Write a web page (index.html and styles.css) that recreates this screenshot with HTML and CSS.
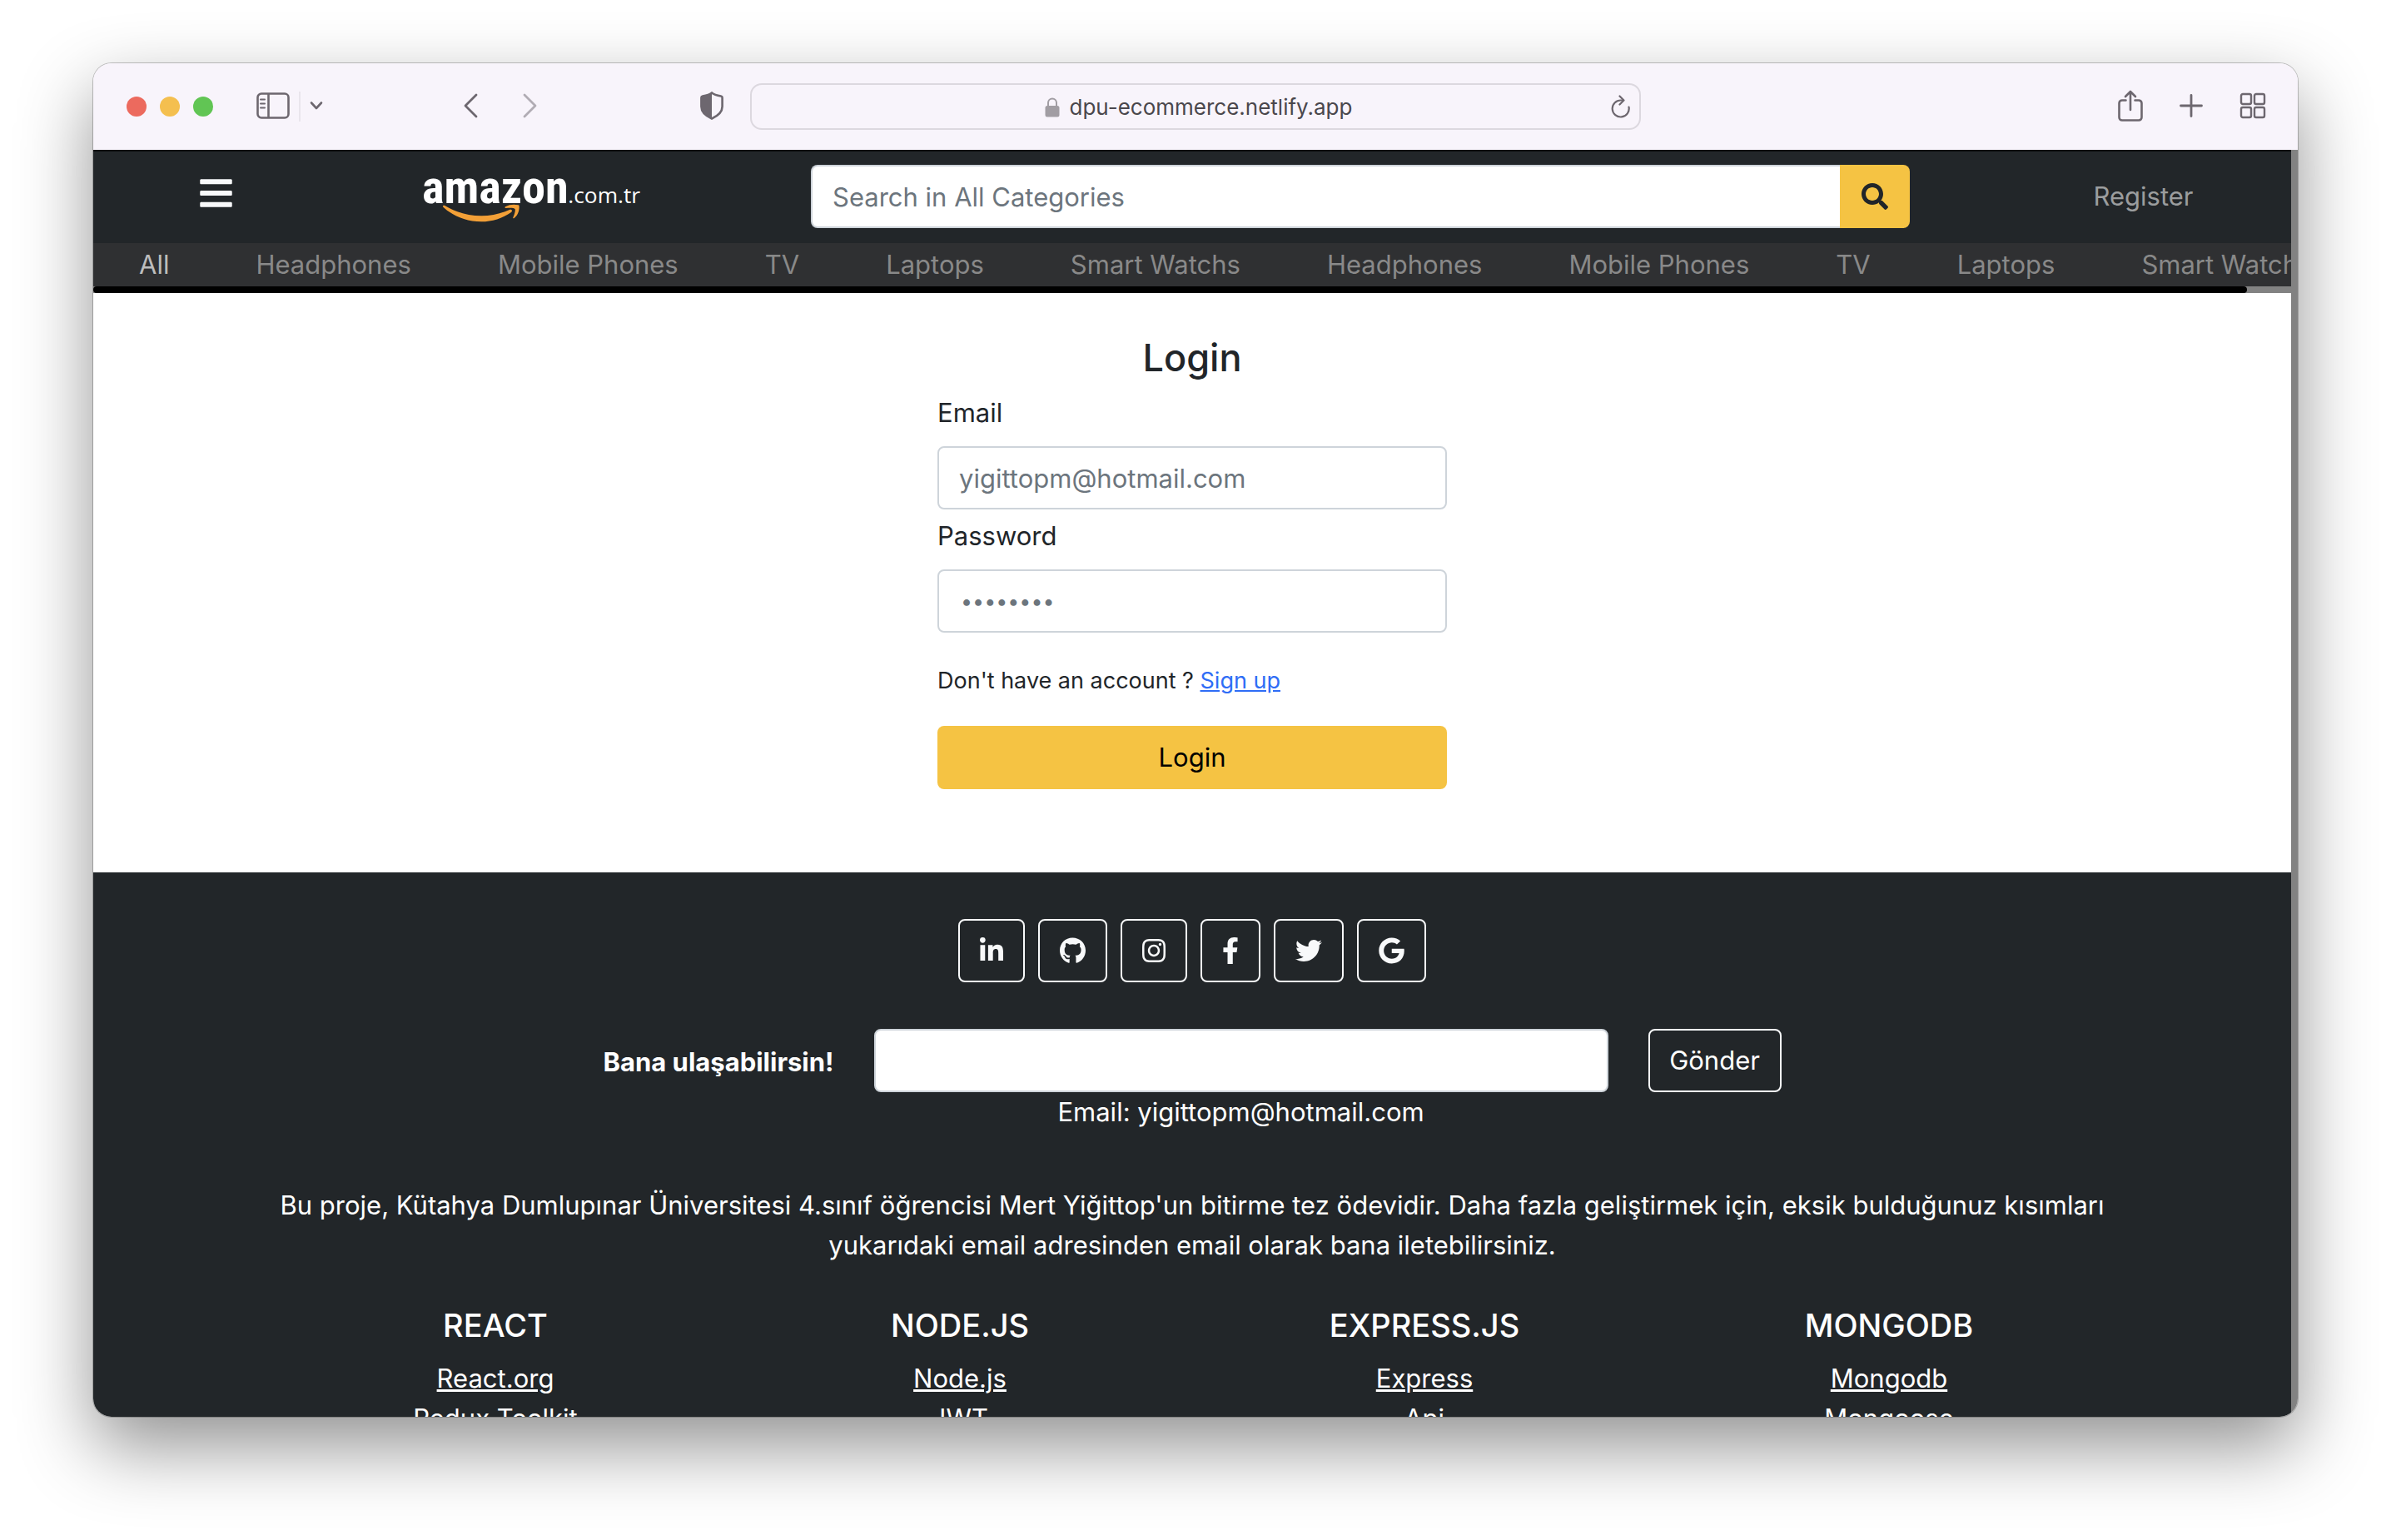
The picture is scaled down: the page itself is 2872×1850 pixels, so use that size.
FILE: index.html
```html
<!DOCTYPE html>
<html lang="tr">
<head>
<meta charset="utf-8">
<meta name="viewport" content="width=device-width, initial-scale=1">
<title>Login</title>
<link rel="stylesheet" href="styles.css">
</head>
<body>
<div class="window">
  <div class="toolbar">
    <div class="toolbar-left">
      <div class="lights"><span class="light red"></span><span class="light yellow"></span><span class="light green"></span></div>
      <div class="sidebar-tools">
        <button class="tool" aria-label="Sidebar"><svg width="40" height="32" viewBox="0 0 40 32" fill="none" stroke="currentColor" stroke-width="2.6"><rect x="1.5" y="1.5" width="37" height="29" rx="4.5"/><path d="M14.5 2v28"/><path d="M5 8.5h5M5 13.5h5M5 18.5h5" stroke-width="2" stroke-linecap="round"/></svg></button>
        <span class="divider"></span>
        <button class="tool" aria-label="Tab groups"><svg width="16" height="12" viewBox="0 0 16 12" fill="none" stroke="currentColor" stroke-width="2.6" stroke-linecap="round" stroke-linejoin="round"><path d="M2 2.500l6 6.500 6-6.500"/></svg></button>
      </div>
      <div class="history">
        <button class="tool" aria-label="Back"><svg width="20" height="32" viewBox="0 0 20 32" fill="none" stroke="currentColor" stroke-width="2.8" stroke-linecap="round" stroke-linejoin="round"><path d="M17 3L4 16l13 13"/></svg></button>
        <button class="tool faded" aria-label="Forward"><svg width="20" height="32" viewBox="0 0 20 32" fill="none" stroke="currentColor" stroke-width="2.8" stroke-linecap="round" stroke-linejoin="round"><path d="M3 3l13 13L3 29"/></svg></button>
      </div>
      <button class="tool shield" aria-label="Privacy report"><svg width="28" height="34" viewBox="0 0 28 34"><path d="M14 1.500C17 4 22 5 25 5.500c1 .2 1.600.9 1.600 1.800V18c0 7-6 11.500-12.600 14.500C7.400 29.500 1.400 25 1.400 18V7.300c0-.9.6-1.600 1.600-1.800C6 5 11 4 14 1.500z" fill="none" stroke="currentColor" stroke-width="2.600"/><path d="M14 1.500v31C7.400 29.500 1.400 25 1.400 18V7.300c0-.9.6-1.600 1.600-1.800C6 5 11 4 14 1.500z" fill="currentColor"/></svg></button>
    </div>
    <div class="address">
      <div class="address-site">
        <svg class="lock" width="18" height="24" viewBox="0 0 18 24"><rect x="0.500" y="10" width="17" height="13.500" rx="2.500" fill="currentColor"/><path d="M4 11V6.500a5 5 0 0 1 10 0V11" fill="none" stroke="currentColor" stroke-width="2"/></svg>
        <input class="address-input" type="text" value="dpu-ecommerce.netlify.app" aria-label="Address">
      </div>
      <button class="tool reload" aria-label="Reload"><svg width="24" height="28" viewBox="0 0 24 28" fill="none" stroke="currentColor" stroke-width="2.200" stroke-linecap="round" stroke-linejoin="round"><path d="M21.500 14.500A10 10 0 1 1 12 6.500h2.500"/><path d="M10.500 1.500l5 5-5 5"/></svg></button>
    </div>
    <div class="toolbar-right">
      <button class="tool" aria-label="Share"><svg width="30" height="38" viewBox="0 0 30 38" fill="none" stroke="currentColor" stroke-width="2.600" stroke-linecap="round" stroke-linejoin="round"><path d="M9.500 12.500H5A3.500 3.500 0 0 0 1.500 16v17A3.500 3.500 0 0 0 5 36.500h20a3.500 3.500 0 0 0 3.500-3.500V16a3.500 3.500 0 0 0-3.500-3.500h-4.500"/><path d="M15 24V2M9 8l6-6 6 6"/></svg></button>
      <button class="tool" aria-label="New tab"><svg width="28" height="28" viewBox="0 0 28 28" fill="none" stroke="currentColor" stroke-width="2.800" stroke-linecap="round"><path d="M14 1.500v25M1.500 14h25"/></svg></button>
      <button class="tool" aria-label="Tab overview"><svg width="32" height="32" viewBox="0 0 32 32" fill="none" stroke="currentColor" stroke-width="2.400"><rect x="2" y="2" width="12" height="12" rx="2"/><rect x="18" y="2" width="12" height="12" rx="2"/><rect x="2" y="18" width="12" height="12" rx="2"/><rect x="18" y="18" width="12" height="12" rx="2"/></svg></button>
    </div>
  </div>

  <div class="viewport">
    <div class="page">
      <header class="header">
        <button class="menu" aria-label="Menu"><svg width="39" height="44" viewBox="0 0 448 512" fill="currentColor"><path d="M16 132h416c8.837 0 16-7.163 16-16V76c0-8.837-7.163-16-16-16H16C7.163 60 0 67.163 0 76v40c0 8.837 7.163 16 16 16zm0 160h416c8.837 0 16-7.163 16-16v-40c0-8.837-7.163-16-16-16H16c-8.837 0-16 7.163-16 16v40c0 8.837 7.163 16 16 16zm0 160h416c8.837 0 16-7.163 16-16v-40c0-8.837-7.163-16-16-16H16c-8.837 0-16 7.163-16 16v40c0 8.837 7.163 16 16 16z"/></svg></button>
        <a class="logo" href="#" aria-label="amazon.com.tr">
          <svg width="264" height="58" viewBox="54 60 792 174">
            <text class="logo-name" x="54" y="163">amazon</text>
            <text class="logo-domain" x="580" y="163">.com.tr</text>
            <path fill="#f3a037" d="M130 176c-3-4 1-8 6-5 40 24 84 37 132 37 34 0 69-8 101-22 7-3 13 3 6 9-30 22-70 34-107 34-54 0-102-20-138-53z"/>
            <path fill="#f3a037" d="M354 175c15-9 33-9 47-6 3 1 3 4 3 8 0 14-6 30-18 39-3 2-5 1-4-2 4-10 9-24 7-30-3-6-21-5-33-4-4 0-5-2-2-5z"/>
          </svg>
        </a>
        <form class="search">
          <input class="control search-input" type="search" placeholder="Search in All Categories" aria-label="Search in All Categories">
          <button class="search-button" type="button" aria-label="Search"><svg width="32" height="32" viewBox="0 0 512 512" fill="currentColor"><path d="M505 442.700L405.300 343c-4.500-4.500-10.600-7-17-7H372c27.600-35.300 44-79.700 44-128C416 93.100 322.900 0 208 0S0 93.100 0 208s93.100 208 208 208c48.300 0 92.700-16.400 128-44v16.300c0 6.400 2.500 12.500 7 17l99.700 99.700c9.400 9.400 24.600 9.400 33.900 0l28.300-28.300c9.400-9.400 9.400-24.600.1-34zM208 336c-70.700 0-128-57.200-128-128 0-70.700 57.200-128 128-128 70.700 0 128 57.200 128 128 0 70.700-57.200 128-128 128z"/></svg></button>
        </form>
        <a class="register" href="#">Register</a>
      </header>

      <nav class="categories">
        <a class="active" href="#">All</a>
        <a href="#">Headphones</a>
        <a href="#">Mobile Phones</a>
        <a href="#">TV</a>
        <a href="#">Laptops</a>
        <a href="#">Smart Watchs</a>
        <a href="#">Headphones</a>
        <a href="#">Mobile Phones</a>
        <a href="#">TV</a>
        <a href="#">Laptops</a>
        <a href="#">Smart Watchs</a>
      </nav>
      <div class="scroll-track"><div class="scroll-thumb"></div></div>

      <main class="main">
        <form class="login">
          <h2>Login</h2>
          <label for="email">Email</label>
          <input class="control" id="email" type="email" placeholder="yigittopm@hotmail.com">
          <label for="password">Password</label>
          <input class="control password" id="password" type="password" placeholder="••••••••">
          <p>Don't have an account ? <a href="#">Sign up</a></p>
          <button class="login-button" type="button">Login</button>
        </form>
      </main>

      <footer class="footer">
        <div class="social">
          <a href="#" aria-label="LinkedIn"><svg width="28" height="32" viewBox="0 0 448 512"><path d="M100.280 448H7.400V148.900h92.880zM53.790 108.100C24.090 108.100 0 83.500 0 53.800a53.790 53.790 0 0 1 107.580 0c0 29.700-24.100 54.300-53.790 54.300zM447.900 448h-92.680V302.400c0-34.700-.7-79.200-48.290-79.200-48.290 0-55.690 37.700-55.690 76.700V448h-92.780V148.900h89.080v40.800h1.300c12.400-23.500 42.690-48.300 87.880-48.300 94 0 111.280 61.900 111.280 142.300V448z"/></svg></a>
          <a href="#" aria-label="GitHub"><svg width="31" height="32" viewBox="0 0 496 512"><path d="M165.900 397.400c0 2-2.300 3.600-5.200 3.600-3.300.3-5.600-1.300-5.600-3.600 0-2 2.300-3.600 5.200-3.600 3-.3 5.600 1.300 5.600 3.600zm-31.100-4.500c-.7 2 1.300 4.300 4.300 4.900 2.600 1 5.600 0 6.200-2s-1.300-4.300-4.300-5.200c-2.600-.7-5.500.3-6.200 2.300zm44.200-1.700c-2.900.7-4.900 2.600-4.600 4.900.3 2 2.900 3.300 5.900 2.600 2.900-.7 4.900-2.600 4.600-4.600-.3-1.900-3-3.200-5.900-2.900zM244.800 8C106.100 8 0 113.300 0 252c0 110.900 69.800 205.800 169.500 239.200 12.800 2.300 17.300-5.600 17.300-12.100 0-6.200-.3-40.400-.3-61.400 0 0-70 15-84.700-29.800 0 0-11.400-29.100-27.800-36.600 0 0-22.900-15.700 1.600-15.400 0 0 24.900 2 38.600 25.800 21.900 38.600 58.600 27.500 72.900 20.900 2.300-16 8.800-27.100 16-33.700-55.900-6.200-112.300-14.300-112.300-110.500 0-27.500 7.600-41.300 23.600-58.900-2.600-6.500-11.100-33.300 2.600-67.900 20.900-6.500 69 27 69 27 20-5.600 41.500-8.500 62.800-8.500s42.800 2.900 62.800 8.500c0 0 48.100-33.600 69-27 13.700 34.700 5.200 61.400 2.600 67.900 16 17.700 25.800 31.500 25.800 58.900 0 96.500-58.900 104.200-114.800 110.500 9.200 7.900 17 22.900 17 46.400 0 33.700-.3 75.400-.3 83.600 0 6.500 4.600 14.400 17.300 12.100C428.200 457.800 496 362.900 496 252 496 113.300 383.500 8 244.800 8z"/></svg></a>
          <a href="#" aria-label="Instagram"><svg width="28" height="32" viewBox="0 0 448 512"><path d="M224.100 141c-63.600 0-114.900 51.300-114.900 114.900s51.300 114.900 114.900 114.900S339 319.500 339 255.900 287.700 141 224.100 141zm0 189.600c-41.100 0-74.700-33.500-74.700-74.700s33.500-74.700 74.700-74.700 74.700 33.500 74.700 74.700-33.600 74.700-74.700 74.700zm146.400-194.300c0 14.900-12 26.800-26.800 26.800-14.900 0-26.800-12-26.800-26.800s12-26.800 26.800-26.800 26.800 12 26.800 26.800zm76.100 27.200c-1.700-35.900-9.900-67.700-36.200-93.900-26.200-26.200-58-34.400-93.900-36.200-37-2.100-147.900-2.100-184.900 0-35.800 1.700-67.600 9.900-93.900 36.100s-34.400 58-36.200 93.900c-2.100 37-2.100 147.900 0 184.900 1.700 35.900 9.900 67.700 36.200 93.900s58 34.400 93.900 36.200c37 2.100 147.900 2.100 184.900 0 35.900-1.700 67.700-9.900 93.900-36.200 26.200-26.200 34.400-58 36.200-93.900 2.100-37 2.100-147.800 0-184.800zM398.800 388c-7.800 19.600-22.900 34.700-42.600 42.600-29.500 11.700-99.500 9-132.100 9s-102.700 2.600-132.100-9c-19.600-7.800-34.700-22.900-42.600-42.600-11.700-29.500-9-99.500-9-132.100s-2.600-102.700 9-132.100c7.800-19.600 22.900-34.700 42.600-42.600 29.500-11.700 99.500-9 132.100-9s102.700-2.600 132.100 9c19.600 7.800 34.700 22.900 42.600 42.600 11.700 29.500 9 99.500 9 132.100s2.700 102.700-9 132.100z"/></svg></a>
          <a href="#" aria-label="Facebook"><svg width="20" height="32" viewBox="0 0 320 512"><path d="M279.140 288l14.220-92.660h-88.910v-60.130c0-25.350 12.420-50.060 52.240-50.060h40.420V6.260S260.430 0 225.360 0c-73.220 0-121.080 44.380-121.080 124.720v70.620H22.890V288h81.390v224h100.170V288z"/></svg></a>
          <a href="#" aria-label="Twitter"><svg width="32" height="32" viewBox="0 0 512 512"><path d="M459.370 151.716c.325 4.548.325 9.097.325 13.645 0 138.720-105.583 298.558-298.558 298.558-59.452 0-114.680-17.219-161.137-47.106 8.447.974 16.568 1.299 25.340 1.299 49.055 0 94.213-16.568 130.274-44.832-46.132-.975-84.792-31.188-98.112-72.772 6.498.974 12.995 1.624 19.818 1.624 9.421 0 18.843-1.300 27.614-3.573-48.081-9.747-84.143-51.980-84.143-102.985v-1.299c13.969 7.797 30.214 12.670 47.431 13.319-28.264-18.843-46.781-51.005-46.781-87.391 0-19.492 5.197-37.360 14.294-52.954 51.655 63.675 129.300 105.258 216.365 109.807-1.624-7.797-2.599-15.918-2.599-24.040 0-57.828 46.782-104.934 104.934-104.934 30.213 0 57.502 12.670 76.670 33.137 23.715-4.548 46.456-13.320 66.599-25.340-7.798 24.366-24.366 44.833-46.132 57.827 21.117-2.273 41.584-8.122 60.426-16.243-14.292 20.791-32.161 39.308-52.628 54.253z"/></svg></a>
          <a href="#" aria-label="Google"><svg width="31" height="32" viewBox="0 0 488 512"><path d="M488 261.800C488 403.300 391.100 504 248 504 110.800 504 0 393.200 0 256S110.800 8 248 8c66.800 0 123 24.500 166.300 64.900l-67.500 64.900C258.500 52.600 94.300 116.600 94.300 256c0 86.500 69.100 156.600 153.700 156.600 98.200 0 135-70.400 140.800-106.900H248v-85.300h236.100c2.300 12.700 3.900 24.900 3.900 41.400z"/></svg></a>
        </div>
        <form class="contact">
          <label for="message">Bana ulaşabilirsin!</label>
          <div class="contact-field">
            <input class="control" id="message" type="text">
            <span>Email: yigittopm@hotmail.com</span>
          </div>
          <button class="send" type="button">Gönder</button>
        </form>
        <p class="about">Bu proje, Kütahya Dumlupınar Üniversitesi 4.sınıf öğrencisi Mert Yiğittop'un bitirme tez ödevidir. Daha fazla geliştirmek için, eksik bulduğunuz kısımları yukarıdaki email adresinden email olarak bana iletebilirsiniz.</p>
        <div class="links">
          <section><h5>REACT</h5><a href="#">React.org</a><a href="#">Redux Toolkit</a></section>
          <section><h5>NODE.JS</h5><a href="#">Node.js</a><a href="#">JWT</a></section>
          <section><h5>EXPRESS.JS</h5><a href="#">Express</a><a href="#">Api</a></section>
          <section><h5>MONGODB</h5><a href="#">Mongodb</a><a href="#">Mongoose</a></section>
        </div>
      </footer>
    </div>
    <div class="page-scrollbar"></div>
  </div>
</div>
</body>
</html>
```
FILE: styles.css
```css
* { box-sizing: border-box; }

:root {
  --text: 31px;
  --line: 48px;
  --dark: #222629;
  --yellow: #f5c343;
}

body {
  margin: 0;
  height: 100vh;
  padding: 76px 112px 148px;
  display: flex;
  flex-direction: column;
  overflow: hidden;
  background: #fff;
  color: #212529;
  font-family: Inter, "Noto Sans", sans-serif;
  font-size: var(--text);
  line-height: var(--line);
}

button, input { font: inherit; color: inherit; }
button { padding: 0; border: 0; background: none; }
svg { display: block; }

.window {
  flex: 1;
  min-height: 0;
  display: flex;
  flex-direction: column;
  overflow: hidden;
  border-radius: 22px;
  box-shadow: 0 0 0 1px rgba(0, 0, 0, .22), 0 36px 88px rgba(0, 0, 0, .43);
}

/* Browser toolbar */
.toolbar {
  flex: none;
  height: 104px;
  display: grid;
  grid-template-columns: 1fr 1070px 1fr;
  align-items: center;
  background: #f8f4fb;
  color: #6d676f;
}
.toolbar-left { display: flex; align-items: center; padding: 0 32px 0 40px; }
.tool { margin-bottom: 2px; }
.lights { display: flex; gap: 16px; }
.light { width: 24px; height: 24px; border-radius: 50%; }
.red { background: #ec6a5e; }
.yellow { background: #f4bf4f; }
.green { background: #61c554; }
.sidebar-tools { display: flex; align-items: center; gap: 11px; margin-left: 52px; }
.divider { width: 2px; height: 36px; background: #e9e5ec; }
.history { display: flex; gap: 52px; margin-left: 167px; }
.faded { opacity: .5; }
.shield { margin-left: auto; }
.address {
  height: 56px;
  display: flex;
  align-items: center;
  padding: 2px 10px 0 41px;
  border: 2px solid #dcd8df;
  border-radius: 14px;
}
.address-site { flex: 1; display: flex; align-items: center; justify-content: center; gap: 12px; }
.lock { color: #a19da3; }
.address-input {
  width: 340px;
  padding: 0;
  border: 0;
  background: none;
  color: #4a474c;
  font-size: 26px;
  line-height: 32px;
}
.toolbar-right { display: flex; align-items: center; justify-content: flex-end; gap: 44px; padding-right: 38px; }

/* Web page */
.viewport { flex: 1; min-height: 0; display: flex; overflow: hidden; }
.page { flex: 1; min-width: 0; background: #fff; }
.page-scrollbar { width: 8px; background: #828282; }

.header {
  height: 112px;
  display: grid;
  grid-template-columns: 295fr 464fr 1526fr 355fr;
  align-items: center;
  justify-items: center;
  background: var(--dark);
  box-shadow: inset 0 2px #0b0c0e;
}
.menu { color: #f8f9fa; margin-bottom: 8px; }
.logo { margin-top: 6px; }
.logo svg { overflow: visible; }
.logo-name { fill: #fff; font: bold 169px "Roboto Condensed", "Open Sans Condensed", Roboto, sans-serif; }
.logo-domain { fill: #fff; font: 79px "Open Sans", sans-serif; }
.search { width: 50vw; max-width: 1320px; display: flex; }
.control {
  width: 100%;
  height: 76px;
  padding: 0 24px;
  border: 2px solid #ced4da;
  border-radius: 8px;
  background: #fff;
}
.control::placeholder { color: #6c757d; opacity: 1; }
.search-input { flex: 1; border-right: 0; border-radius: 8px 0 0 8px; appearance: none; }
.search-button {
  width: 84px;
  display: grid;
  place-items: center;
  border-radius: 0 8px 8px 0;
  background: var(--yellow);
}
.register { color: #9b9d9e; text-decoration: none; }

.categories {
  height: 52px;
  display: flex;
  gap: 104px;
  padding: 2px 0 2px 55px;
  overflow: hidden;
  white-space: nowrap;
  background: #2f3032;
}
.categories a { color: #898989; text-decoration: none; }
.categories .active { color: #bdbdbd; }
.scroll-track { height: 8px; background: #828282; }
.scroll-thumb { width: 98%; height: 8px; border-radius: 4px; background: #000; }

.main { display: flex; justify-content: center; padding: 50px 24px 100px; }
.login { width: 612px; display: flex; flex-direction: column; }
.login h2 { margin: 0 0 14px; font-size: 45px; font-weight: 500; line-height: 56px; text-align: center; }
.login label { margin-bottom: 16px; }
.login .control { margin-bottom: 8px; }
.login .password { padding: 0 26px; font-size: 25px; }
.login p { margin: 28px 0 32px; font-size: 27px; line-height: 44px; }
.login p a { color: #2f6df6; }
.login-button { height: 76px; border-radius: 8px; background: var(--yellow); color: #000; }

.footer {
  padding: 56px 204px;
  background: var(--dark);
  color: #fff;
  text-align: center;
}
.social { display: flex; justify-content: center; gap: 16px; }
.social a {
  height: 76px;
  display: flex;
  align-items: center;
  padding: 0 24px;
  border: 2px solid #f8f9fa;
  border-radius: 8px;
}
.social svg { fill: #f8f9fa; }
.contact { display: flex; justify-content: center; gap: 48px; margin-top: 56px; }
.contact label { padding-top: 16px; font-weight: 700; }
.contact-field { width: 882px; display: flex; flex-direction: column; }
.send { width: 160px; height: 76px; border: 2px solid #f8f9fa; border-radius: 8px; }
.about { margin: 64px 0 48px; }
.links { display: grid; grid-template-columns: repeat(4, 1fr); }
.links section { display: flex; flex-direction: column; align-items: center; }
.links h5 { margin: 0 0 16px; font-size: 38px; font-weight: 500; line-height: 48px; }
.links a { color: #fff; }
```
